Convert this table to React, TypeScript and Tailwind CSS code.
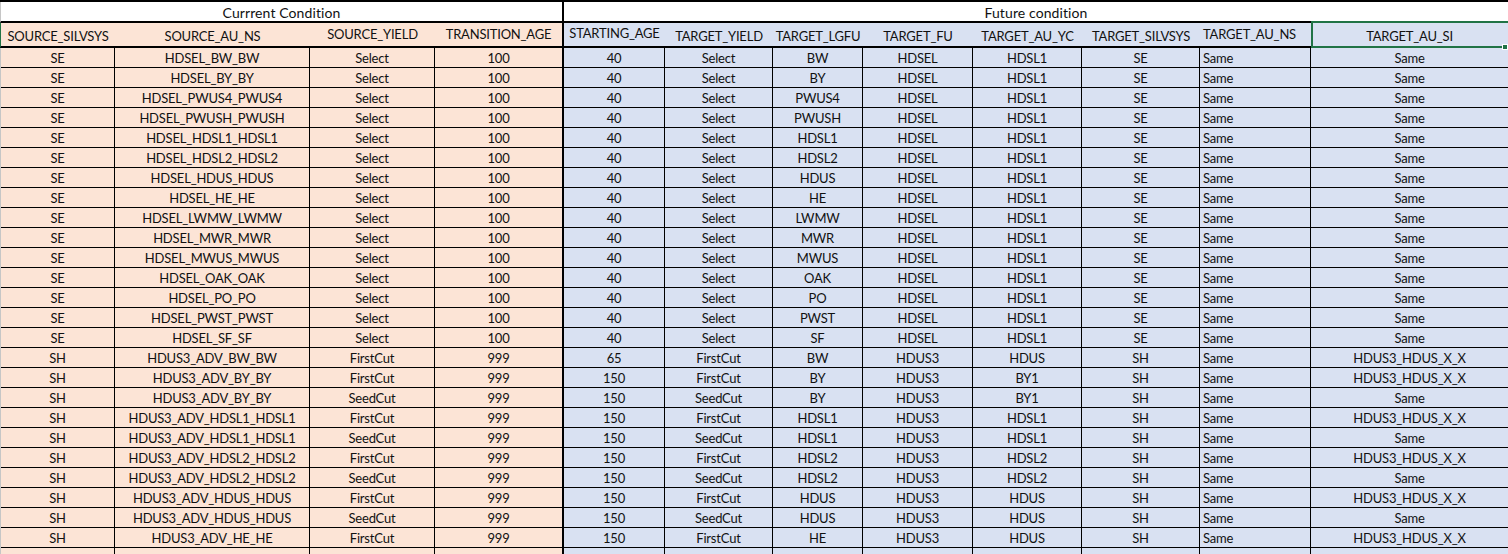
import React from 'react';

const grid =
  'grid grid-cols-[114px_195px_125px_129px_101px_108px_90px_110px_109px_118px_111px_197px]';

const headers = [
  { label: 'SOURCE_SILVSYS', pb: 'pb-[3px]' },
  { label: 'SOURCE_AU_NS', pb: 'pb-[3px]' },
  { label: 'SOURCE_YIELD', pb: 'pb-[5px]' },
  { label: 'TRANSITION_AGE', pb: 'pb-[5px]' },
  { label: 'STARTING_AGE', pb: 'pb-[6px]' },
  { label: 'TARGET_YIELD', pb: 'pb-[3px]' },
  { label: 'TARGET_LGFU', pb: 'pb-[3px]' },
  { label: 'TARGET_FU', pb: 'pb-[3px]' },
  { label: 'TARGET_AU_YC', pb: 'pb-[3px]' },
  { label: 'TARGET_SILVSYS', pb: 'pb-[3px]' },
  { label: 'TARGET_AU_NS', pb: 'pb-[5px]' },
  { label: 'TARGET_AU_SI', pb: 'pb-[3px]' },
];

const seSpecies = ['BW', 'BY', 'PWUS4', 'PWUSH', 'HDSL1', 'HDSL2', 'HDUS', 'HE', 'LWMW', 'MWR', 'MWUS', 'OAK', 'PO', 'PWST', 'SF'];

const seRows = seSpecies.map((sp) => [
  'SE', `HDSEL_${sp}_${sp}`, 'Select', '100', '40', 'Select', sp, 'HDSEL', 'HDSL1', 'SE', 'Same', 'Same',
]);

// [species, yield, starting age, yc]
const shData: [string, string, string, string][] = [
  ['BW', 'FirstCut', '65', 'HDUS'],
  ['BY', 'FirstCut', '150', 'BY1'],
  ['BY', 'SeedCut', '150', 'BY1'],
  ['HDSL1', 'FirstCut', '150', 'HDSL1'],
  ['HDSL1', 'SeedCut', '150', 'HDSL1'],
  ['HDSL2', 'FirstCut', '150', 'HDSL2'],
  ['HDSL2', 'SeedCut', '150', 'HDSL2'],
  ['HDUS', 'FirstCut', '150', 'HDUS'],
  ['HDUS', 'SeedCut', '150', 'HDUS'],
  ['HE', 'FirstCut', '150', 'HDUS'],
  ['HE', 'SeedCut', '150', 'HDUS'],
];

const shRows = shData.map(([sp, yld, age, yc]) => [
  'SH', `HDUS3_ADV_${sp}_${sp}`, yld, '999', age, yld, sp, 'HDUS3', yc, 'SH', 'Same',
  yld === 'FirstCut' ? 'HDUS3_HDUS_X_X' : 'Same',
]);

const rows = [...seRows, ...shRows];

function cellClass(i: number) {
  const bg = i < 4 ? 'bg-[#fce4d6]' : 'bg-[#d9e1f2]';
  const right = i === 3 ? 'border-r-2' : i === 11 ? '' : 'border-r';
  const align = i === 10 ? 'justify-start pl-[3px]' : 'justify-center';
  return `${bg} ${right} ${align} flex items-center border-b border-black whitespace-nowrap overflow-hidden`;
}

export default function App() {
  return (
    <div className="w-[1508px] h-[554px] overflow-hidden bg-white font-[Lato,sans-serif] text-[13px] tracking-[-0.2px] text-[#111] leading-none">
      <div className="border-t-2 border-black">
        {/* group header */}
        <div className={`${grid} h-[21px] border-b-2 border-black border-l border-l-[#c6c6c6] text-[14px] tracking-[0.1px]`}>
          <div className="col-span-4 flex items-center justify-center border-r-2 border-black pt-[2px]">
            Currrent Condition
          </div>
          <div className="col-span-8 flex items-center justify-center pt-[2px]">Future condition</div>
        </div>

        {/* column headers */}
        <div className={`${grid} h-[25px] border-b-2 border-black border-l border-l-[#217346]`}>
          {headers.map((h, i) => (
            <div
              key={h.label}
              className={`relative flex items-end whitespace-nowrap ${h.pb} ${
                i < 4 ? 'bg-[#fce4d6]' : 'bg-[#d9e1f2]'
              } ${i === 3 ? 'border-r-2 border-black' : ''} ${i === 10 ? 'justify-start pl-[3px]' : 'justify-center'}`}
            >
              {h.label}
              {i === 11 && (
                <>
                  <div className="absolute -top-[2px] left-0 -right-[2px] -bottom-[2px] border-2 border-[#217346]" />
                  <div className="absolute -bottom-[4px] right-0 w-[6px] h-[6px] bg-[#217346] border border-white" />
                </>
              )}
            </div>
          ))}
        </div>

        {/* data rows */}
        {rows.map((r, ri) => (
          <div key={ri} className={`${grid} h-[20px] border-l border-l-[#c6c6c6]`}>
            {r.map((v, i) => (
              <div key={i} className={`${cellClass(i)} ${ri === rows.length - 1 ? 'pt-[6px]' : 'pt-[2px]'}`}>
                {v}
              </div>
            ))}
          </div>
        ))}
      </div>
    </div>
  );
}
